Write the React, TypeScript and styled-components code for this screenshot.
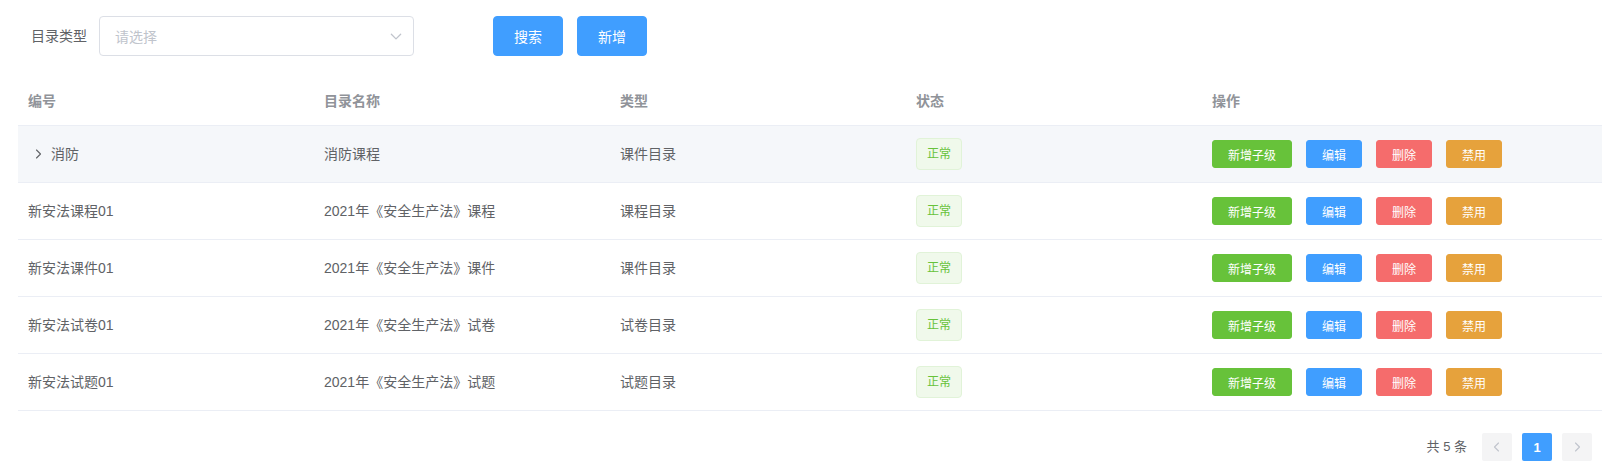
import React from "react";
import styled, { createGlobalStyle } from "styled-components";

const GlobalStyle = createGlobalStyle`
  html, body { margin: 0; padding: 0; background: #fff; }
  body {
    font-family: "Liberation Sans", "Noto Sans CJK SC", sans-serif;
    color: #606266;
    -webkit-font-smoothing: antialiased;
  }
  * { box-sizing: border-box; }
`;

const Page = styled.div`
  padding: 16px 18px 0 18px;
  width: 1620px;
`;

const SearchForm = styled.div`
  display: flex;
  align-items: center;
  height: 40px;
  margin-bottom: 22px;
  padding-left: 13px;
`;

const FieldLabel = styled.label`
  font-size: 14px;
  color: #606266;
  padding-right: 12px;
  line-height: 40px;
`;

const SelectBox = styled.div`
  width: 315px;
  height: 40px;
  border: 1px solid #dcdfe6;
  border-radius: 4px;
  display: flex;
  align-items: center;
  justify-content: space-between;
  padding: 0 10px 0 15px;
  margin-right: 79px;
`;

const Placeholder = styled.span`
  font-size: 14px;
  color: #c0c4cc;
`;

const Actions = styled.div`
  display: flex;
  gap: 14px;
`;

const PrimaryButton = styled.button`
  height: 40px;
  padding: 0 20px;
  font-size: 14px;
  font-family: inherit;
  color: #fff;
  background: #409eff;
  border: 1px solid #409eff;
  border-radius: 4px;
  cursor: pointer;
`;

const Table = styled.div`
  width: 1584px;
`;

const Row = styled.div<{ $head?: boolean; $highlight?: boolean }>`
  display: grid;
  grid-template-columns: 296px 296px 296px 296px 400px;
  align-items: center;
  height: ${(p) => (p.$head ? 48 : 57)}px;
  border-bottom: 1px solid #ebeef5;
  background: ${(p) => (p.$highlight ? "#f5f7fa" : "#fff")};
  font-size: 14px;
  color: ${(p) => (p.$head ? "#909399" : "#606266")};
  font-weight: ${(p) => (p.$head ? 700 : 400)};
`;

const Cell = styled.div`
  padding: 0 10px;
  display: flex;
  align-items: center;
  line-height: 23px;
  white-space: nowrap;
`;

const ExpandIcon = styled.span`
  width: 20px;
  margin-right: 3px;
  display: inline-flex;
  align-items: center;
  justify-content: center;
  color: #606266;
`;

const Tag = styled.span`
  display: inline-flex;
  align-items: center;
  height: 32px;
  padding: 0 10px;
  font-size: 12px;
  color: #67c23a;
  background: #f0f9eb;
  border: 1px solid #e1f3d8;
  border-radius: 4px;
`;

const OpGroup = styled.div`
  display: flex;
  gap: 14px;
`;

const MiniButton = styled.button<{ $color: string }>`
  height: 28px;
  padding: 0 15px;
  font-size: 12px;
  font-family: inherit;
  color: #fff;
  background: ${(p) => p.$color};
  border: 1px solid ${(p) => p.$color};
  border-radius: 3px;
  cursor: pointer;
`;

const Pager = styled.div`
  display: flex;
  justify-content: flex-end;
  align-items: center;
  margin-top: 20px;
  padding: 2px 5px;
  width: 1584px;
`;

const Total = styled.span`
  font-size: 13px;
  color: #606266;
  margin-right: 10px;
  line-height: 28px;
`;

const PageBtn = styled.button<{ $active?: boolean }>`
  min-width: 30px;
  height: 28px;
  margin: 0 5px;
  padding: 0;
  border: none;
  border-radius: 2px;
  font-family: inherit;
  font-size: 13px;
  font-weight: 700;
  display: inline-flex;
  align-items: center;
  justify-content: center;
  background: ${(p) => (p.$active ? "#409eff" : "#f4f4f5")};
  color: ${(p) => (p.$active ? "#fff" : "#c0c4cc")};
`;

const Chevron = ({ dir, size = 12, color = "currentColor" }: { dir: "left" | "right" | "down"; size?: number; color?: string }) => {
  const d =
    dir === "right" ? "M4.5 2 L8.5 6 L4.5 10" : dir === "left" ? "M7.5 2 L3.5 6 L7.5 10" : "M2 4.5 L6 8.5 L10 4.5";
  return (
    <svg width={size} height={size} viewBox="0 0 12 12" fill="none">
      <path d={d} stroke={color} strokeWidth="1.1" strokeLinecap="round" strokeLinejoin="round" />
    </svg>
  );
};

const rows = [
  { id: "消防", name: "消防课程", type: "课件目录", tree: true },
  { id: "新安法课程01", name: "2021年《安全生产法》课程", type: "课程目录" },
  { id: "新安法课件01", name: "2021年《安全生产法》课件", type: "课件目录" },
  { id: "新安法试卷01", name: "2021年《安全生产法》试卷", type: "试卷目录" },
  { id: "新安法试题01", name: "2021年《安全生产法》试题", type: "试题目录" },
];

export default function App() {
  return (
    <>
      <GlobalStyle />
      <Page>
        <SearchForm>
          <FieldLabel>目录类型</FieldLabel>
          <SelectBox>
            <Placeholder>请选择</Placeholder>
            <Chevron dir="down" size={14} color="#c0c4cc" />
          </SelectBox>
          <Actions>
            <PrimaryButton>搜索</PrimaryButton>
            <PrimaryButton>新增</PrimaryButton>
          </Actions>
        </SearchForm>
        <Table>
          <Row $head>
            <Cell>编号</Cell>
            <Cell>目录名称</Cell>
            <Cell>类型</Cell>
            <Cell>状态</Cell>
            <Cell>操作</Cell>
          </Row>
          {rows.map((r, i) => (
            <Row key={i} $highlight={i === 0}>
              <Cell>
                {r.tree && (
                  <ExpandIcon>
                    <Chevron dir="right" size={12} color="#606266" />
                  </ExpandIcon>
                )}
                {r.id}
              </Cell>
              <Cell>{r.name}</Cell>
              <Cell>{r.type}</Cell>
              <Cell>
                <Tag>正常</Tag>
              </Cell>
              <Cell>
                <OpGroup>
                  <MiniButton $color="#67c23a">新增子级</MiniButton>
                  <MiniButton $color="#409eff">编辑</MiniButton>
                  <MiniButton $color="#f56c6c">删除</MiniButton>
                  <MiniButton $color="#e6a23c">禁用</MiniButton>
                </OpGroup>
              </Cell>
            </Row>
          ))}
        </Table>
        <Pager>
          <Total>共 5 条</Total>
          <PageBtn>
            <Chevron dir="left" size={12} />
          </PageBtn>
          <PageBtn $active>1</PageBtn>
          <PageBtn>
            <Chevron dir="right" size={12} />
          </PageBtn>
        </Pager>
      </Page>
    </>
  );
}
